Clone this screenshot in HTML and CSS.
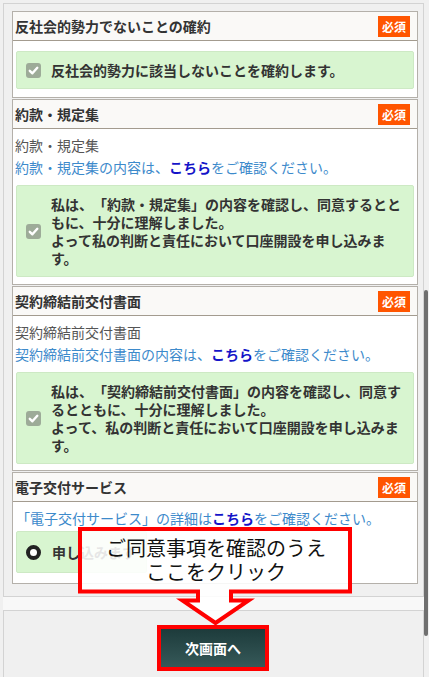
FILE: index.html
```html
<!DOCTYPE html>
<html lang="ja">
<head>
<meta charset="utf-8">
<title>確認</title>
<link rel="stylesheet" href="styles.css">
</head>
<body>
<div class="panel">
  <section class="card">
    <div class="card-head"><h2 class="card-title">反社会的勢力でないことの確約</h2><span class="badge">必須</span></div>
    <div class="card-body body-first">
      <div class="agree">
        <span class="check"><svg width="15" height="15" viewBox="0 0 15 15"><polyline points="3.8,7.8 6.4,10.3 11.3,4.8" fill="none" stroke="#fff" stroke-width="2.4" stroke-linecap="round" stroke-linejoin="round"/></svg></span>
        <p class="agree-text">反社会的勢力に該当しないことを確約します。</p>
      </div>
    </div>
  </section>

  <section class="card">
    <div class="card-head"><h2 class="card-title">約款・規定集</h2><span class="badge">必須</span></div>
    <div class="card-body">
      <p class="plain">約款・規定集</p>
      <p class="link-line">約款・規定集の内容は、<b class="here">こちら</b>をご確認ください。</p>
      <div class="agree">
        <span class="check"><svg width="15" height="15" viewBox="0 0 15 15"><polyline points="3.8,7.8 6.4,10.3 11.3,4.8" fill="none" stroke="#fff" stroke-width="2.4" stroke-linecap="round" stroke-linejoin="round"/></svg></span>
        <p class="agree-text">私は、「約款・規定集」の内容を確認し、同意するとともに、十分に理解しました。<br>よって私の判断と責任において口座開設を申し込みます。</p>
      </div>
    </div>
  </section>

  <section class="card">
    <div class="card-head"><h2 class="card-title">契約締結前交付書面</h2><span class="badge">必須</span></div>
    <div class="card-body body-third">
      <p class="plain">契約締結前交付書面</p>
      <p class="link-line">契約締結前交付書面の内容は、<b class="here">こちら</b>をご確認ください。</p>
      <div class="agree">
        <span class="check"><svg width="15" height="15" viewBox="0 0 15 15"><polyline points="3.8,7.8 6.4,10.3 11.3,4.8" fill="none" stroke="#fff" stroke-width="2.4" stroke-linecap="round" stroke-linejoin="round"/></svg></span>
        <p class="agree-text">私は、「契約締結前交付書面」の内容を確認し、同意するとともに、十分に理解しました。<br>よって、私の判断と責任において口座開設を申し込みます。</p>
      </div>
    </div>
  </section>

  <section class="card card-last">
    <div class="card-head"><h2 class="card-title">電子交付サービス</h2><span class="badge">必須</span></div>
    <div class="card-body body-last">
      <p class="link-line">「電子交付サービス」の詳細は<b class="here">こちら</b>をご確認ください。</p>
      <div class="radio-item">
        <span class="radio"></span>
        <span class="agree-text">申し込みます</span>
      </div>
    </div>
  </section>
</div>
<div class="band"></div>
<div class="footer">
  <div class="btn-mark"><button class="next-btn" type="button">次画面へ</button></div>
</div>

<div class="callout">
  <svg class="callout-shape" width="284" height="106" viewBox="74 524 284 106">
    <path d="M80,529 H350 V591.5 H231 V600.5 H248.5 L215.5,623 L182.5,600.5 H198 V591.5 H80 Z" fill="#ffffff" fill-opacity="0.88" stroke="#ff0000" stroke-width="4" stroke-linejoin="miter"/>
  </svg>
  <div class="callout-text">
    <span>ご同意事項を確認のうえ</span>
    <span>ここをクリック</span>
  </div>
</div>
<div class="scrollbar"></div>
</body>
</html>
```

FILE: styles.css
```css
* { box-sizing: border-box; }
html, body { margin: 0; padding: 0; }
body {
  background: #f0f0f0;
  font-family: "Noto Sans CJK JP", "Noto Sans", sans-serif;
  color: #333;
  width: 429px;
  height: 677px;
  overflow: hidden;
  position: relative;
  text-spacing-trim: space-all;
}
p { margin: 0; }

.panel {
  margin: 3px 5px 0 3px;
  border: 1px solid #d3d3d3;
  background: #f0f0f0;
  padding: 7px 5px 12px 8px;
  display: flex;
  flex-direction: column;
  gap: 1px;
}

.card {
  background: #fff;
  border: 1px solid #b4b0aa;
}

.card-head {
  height: 29px;
  display: flex;
  align-items: center;
  justify-content: space-between;
  background: #faf9f7;
  border-bottom: 1px solid #a39b8f;
  padding: 0 7px 0 2px;
}
.card-title {
  margin: 0;
  font-size: 14px;
  font-weight: bold;
  color: #333;
  line-height: 20px;
}
.badge {
  width: 32px;
  height: 21px;
  line-height: 21px;
  text-align: center;
  background: #ff5500;
  color: #fff;
  font-size: 12px;
  font-weight: bold;
}

.card-body {
  padding: 9px 3px 7px 3px;
}
.body-first { padding: 10px 3px 8px 3px; }
.body-third { padding-bottom: 6px; }
.card-body .plain,
.card-body .link-line {
  margin-left: -1px;
}
.card-body .plain:first-child { margin-top: -4px; }
.plain {
  font-size: 14px;
  line-height: 22px;
  color: #555;
}
.link-line {
  font-size: 14px;
  line-height: 22px;
  color: #3d8acb;
}
.here {
  color: #1414c8;
  font-weight: bold;
}
.link-line + .agree { margin-top: 7px; }

.agree {
  display: flex;
  align-items: center;
  gap: 10px;
  background: #d8f5d0;
  border: 1px solid #cde9c4;
  border-radius: 2px;
  padding: 9px;
}
.check {
  flex: none;
  width: 15px;
  height: 15px;
  border-radius: 3px;
  background: #9dab98;
  display: flex;
}
.agree-text {
  font-size: 14px;
  line-height: 18px;
  font-weight: bold;
  color: #333;
  width: 353px;
}

.body-last {
  padding: 5px 3px 10px 3px;
}
.body-last .link-line { margin-left: 0; }
.radio-item {
  margin-top: 2px;
  display: inline-flex;
  align-items: center;
  gap: 11px;
  background: #d8f5d0;
  border: 1px solid #cde9c4;
  border-radius: 2px;
  padding: 11px 10px 11px 9px;
}
.radio-item .agree-text { width: auto; }
.radio {
  flex: none;
  width: 15px;
  height: 15px;
  border-radius: 50%;
  background: #fff;
  border: 4.5px solid #222;
}

.band {
  height: 13px;
  margin: 0 5px 0 3px;
  background: #f8f8f8;
}

.footer {
  margin: 0 5px 0 3px;
  height: 70px;
  border: 1px solid #d3d3d3;
  border-bottom: none;
  background: #f0f0f0;
  padding-top: 14px;
  display: flex;
  justify-content: center;
  align-items: flex-start;
}
.btn-mark {
  border: 4px solid #ff0000;
  margin-left: -1px;
  display: flex;
}
.next-btn {
  width: 104px;
  height: 38px;
  border: none;
  padding: 0;
  background: linear-gradient(#1d3b3b, #365959);
  color: #fff;
  font-family: "Noto Sans CJK JP", sans-serif;
  font-size: 14px;
  font-weight: bold;
}

.callout {
  position: absolute;
  left: 74px;
  top: 524px;
  width: 284px;
  height: 106px;
}
.callout-shape {
  position: absolute;
  left: 0;
  top: 0;
  display: block;
}
.callout-text {
  position: absolute;
  left: 8px;
  top: 7px;
  width: 268px;
  height: 59px;
  display: flex;
  flex-direction: column;
  align-items: center;
  justify-content: center;
  font-family: "Liberation Serif", "Noto Sans CJK JP", serif;
  font-size: 20px;
  line-height: 24px;
  color: #111;
}

.scrollbar {
  position: absolute;
  right: 1px;
  top: 290px;
  width: 4px;
  height: 346px;
  border-radius: 2px;
  background: #6f6f6f;
}
```
